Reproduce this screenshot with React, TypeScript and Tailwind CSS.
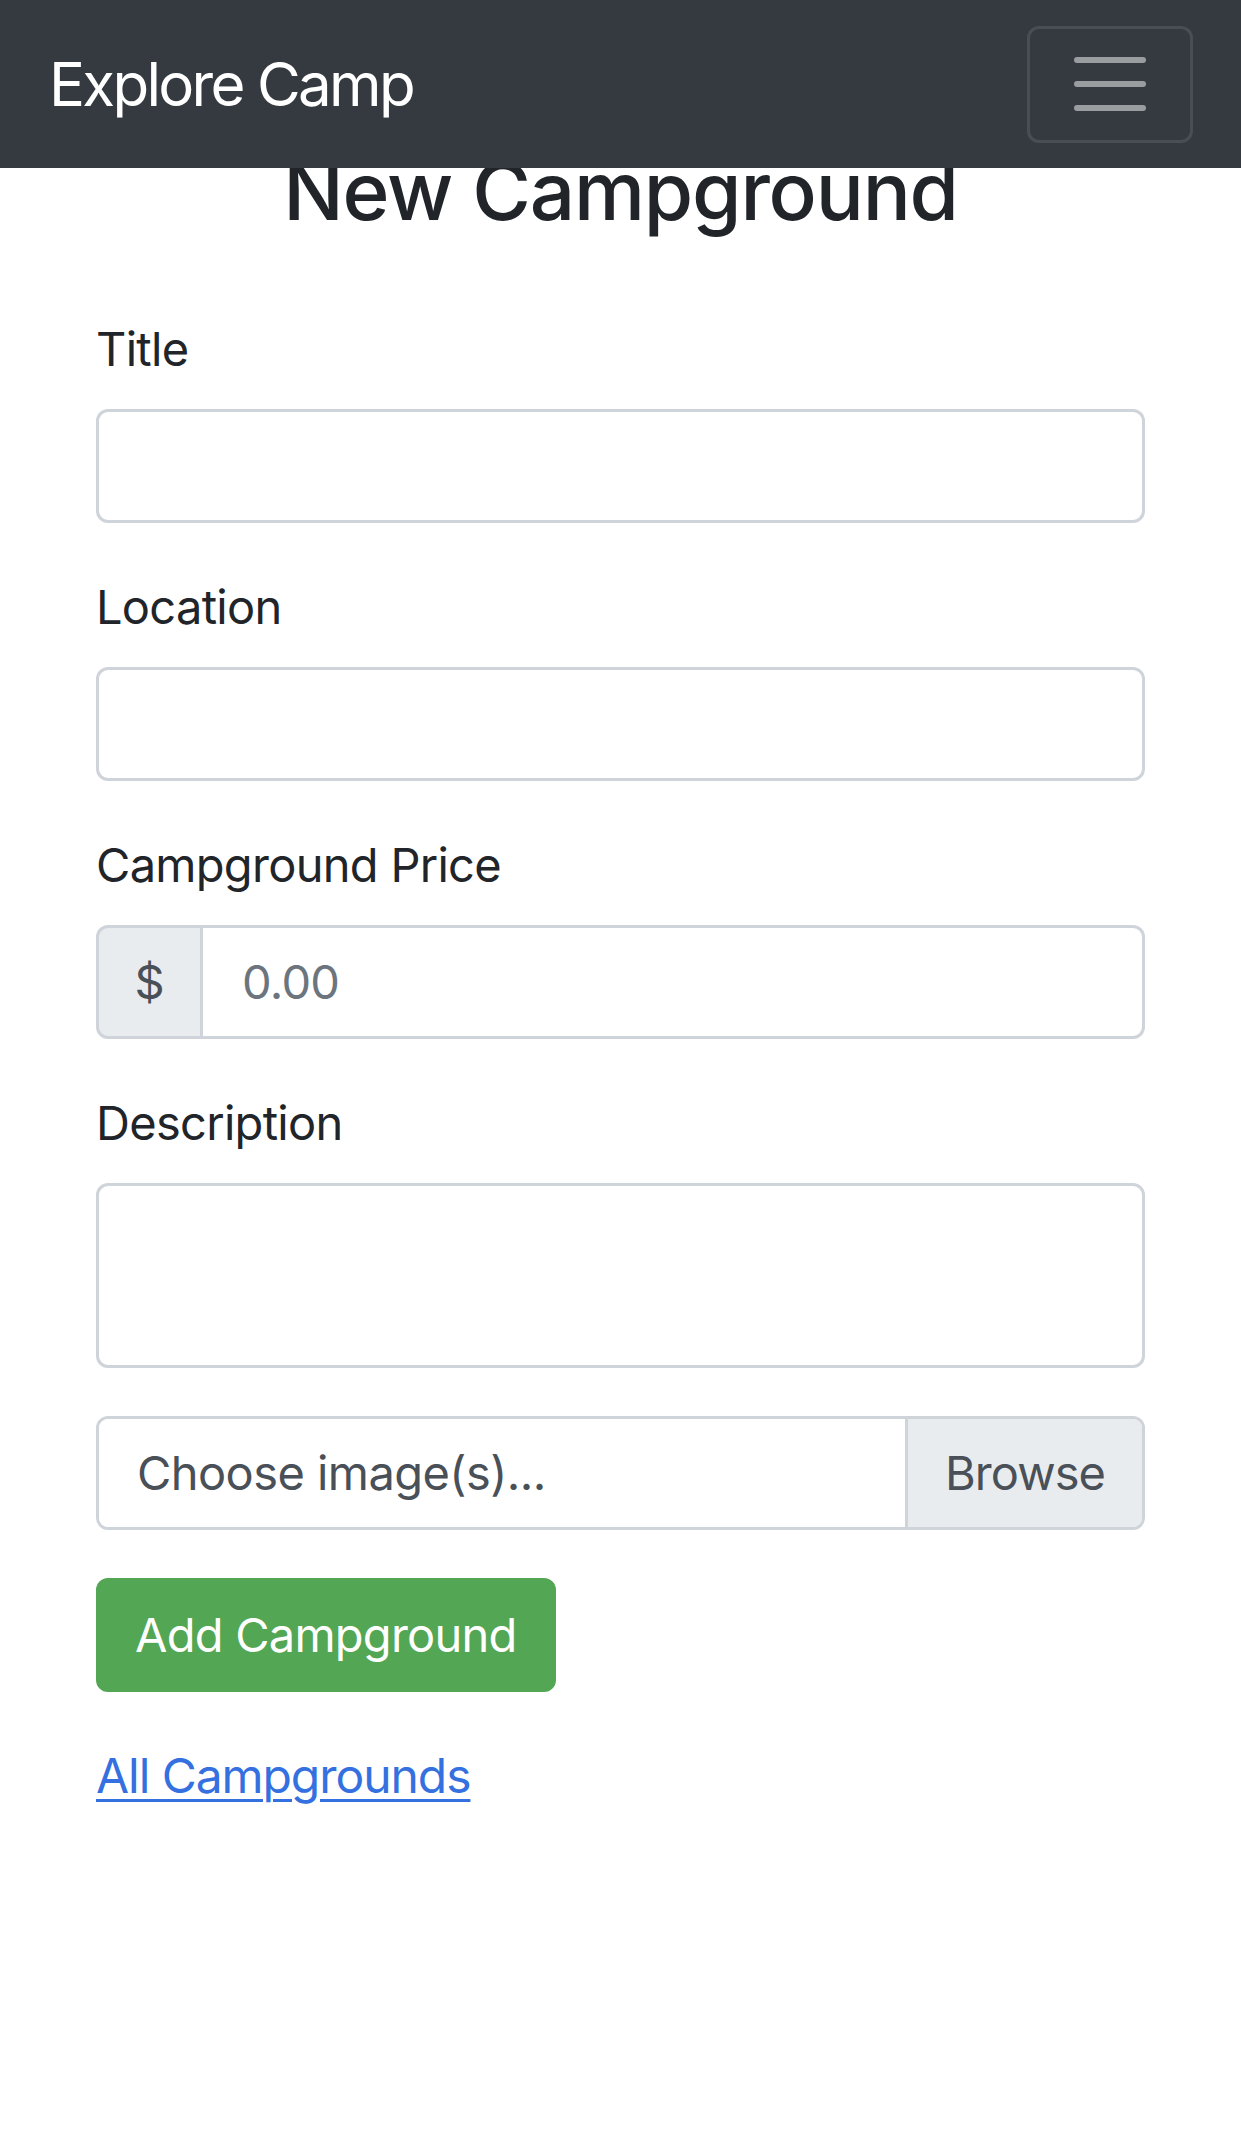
import React from "react";

export default function App() {
  return (
    <div className="min-h-[2140px] bg-white font-['Inter','Roboto','Liberation_Sans',sans-serif] text-[#212529]">
      <nav className="fixed inset-x-0 top-0 z-10 flex h-[168px] items-center justify-between bg-[#343a40] pl-[49px] pr-[48px]">
        <a href="#" className="text-[60px] leading-none tracking-[-0.045em] text-white">
          Explore Camp
        </a>
        <button
          type="button"
          className="flex h-[117px] w-[166px] items-center justify-center rounded-[12px] border-[3px] border-[#484e53]"
        >
          <svg width="90" height="90" viewBox="0 0 30 30">
            <path
              d="M4 7h22M4 15h22M4 23h22"
              stroke="#9a9da0"
              strokeWidth="2"
              strokeLinecap="round"
              fill="none"
            />
          </svg>
        </button>
      </nav>

      <main className="px-[96px] pt-[143px]">
        <h1 className="mb-[74px] text-center text-[80px] font-medium leading-[1.2] tracking-[-0.015em] text-[#212529]">
          New Campground
        </h1>

        <form>
          <div className="mb-[48px]">
            <label className="mb-[24px] block text-[47px] leading-[72px] tracking-[-0.015em]">Title</label>
            <div className="h-[114px] rounded-[12px] border-[3px] border-[#ced4da] bg-white" />
          </div>

          <div className="mb-[48px]">
            <label className="mb-[24px] block text-[47px] leading-[72px] tracking-[-0.015em]">Location</label>
            <div className="h-[114px] rounded-[12px] border-[3px] border-[#ced4da] bg-white" />
          </div>

          <div className="mb-[48px]">
            <label className="mb-[24px] block text-[47px] leading-[72px] tracking-[-0.015em]">Campground Price</label>
            <div className="flex h-[114px]">
              <div className="flex w-[107px] items-center justify-center rounded-l-[12px] border-[3px] border-[#ced4da] bg-[#e9ecef] text-[47px] text-[#495057]">
                $
              </div>
              <div className="flex flex-1 items-center rounded-r-[12px] border-y-[3px] border-r-[3px] border-[#ced4da] bg-white pl-[39px] text-[47px] tracking-[-0.015em] text-[#6c757d]">
                0.00
              </div>
            </div>
          </div>

          <div className="mb-[48px]">
            <label className="mb-[24px] block text-[47px] leading-[72px] tracking-[-0.015em]">Description</label>
            <div className="h-[185px] rounded-[12px] border-[3px] border-[#ced4da] bg-white" />
          </div>

          <div className="mb-[48px] flex h-[114px] overflow-hidden rounded-[12px] border-[3px] border-[#ced4da]">
            <div className="flex flex-1 items-center bg-white pl-[38px] text-[47px] tracking-[-0.012em] text-[#495057]">
              Choose image(s)...
            </div>
            <div className="flex w-[237px] items-center justify-center border-l-[3px] border-[#ced4da] bg-[#e9ecef] text-[47px] tracking-[-0.02em] text-[#495057]">
              Browse
            </div>
          </div>

          <button
            type="button"
            className="flex h-[114px] items-center rounded-[12px] border-[3px] border-[#53a653] bg-[#53a653] px-[36px] text-[47px] tracking-[-0.016em] text-white"
          >
            Add Campground
          </button>
        </form>

        <div className="mt-[48px] text-[48px] leading-[72px] tracking-[-0.022em]">
          <a href="#" className="text-[#3470df] underline decoration-[3px] underline-offset-[6px]">
            All Campgrounds
          </a>
        </div>
      </main>
    </div>
  );
}
